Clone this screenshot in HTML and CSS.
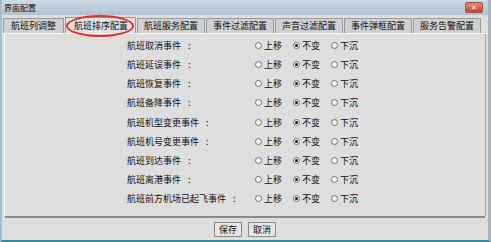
FILE: index.html
```html
<!DOCTYPE html>
<html lang="zh">
  <head>
    <meta charset="UTF-8" />
    <title>界面配置</title>
    <link rel="stylesheet" href="styles.css">
  </head>
  <body>
    <div class="window">
      <div class="titleBar">
        <span class="titleText">界面配置</span>
        <span class="close">✕</span>
      </div>
      <div class="tabs">
        <div class="tab">航班列调整</div>
        <div class="tab active">航班排序配置<span class="mark"></span></div>
        <div class="tab">航班服务配置</div>
        <div class="tab">事件过滤配置</div>
        <div class="tab">声音过滤配置</div>
        <div class="tab">事件弹框配置</div>
        <div class="tab">服务告警配置</div>
      </div>
      <div class="panel">
        <div class="rows"></div>
      </div>
      <div class="footer">
        <button class="btn">保存</button>
        <button class="btn">取消</button>
      </div>
    </div>
    <template id="row">
      <div class="row">
        <div class="label"><span class="name"></span><span class="colon">:</span></div>
        <div class="opts">
          <span class="opt"><i class="radio"></i>上移</span>
          <span class="opt"><i class="radio on"></i>不变</span>
          <span class="opt"><i class="radio"></i>下沉</span>
        </div>
      </div>
    </template>
    <script>
      const names = ['航班取消事件', '航班延误事件', '航班恢复事件', '航班备降事件', '航班机型变更事件',
        '航班机号变更事件', '航班到达事件', '航班离港事件', '航班前方机场已起飞事件'];
      const rows = document.querySelector('.rows');
      const tpl = document.getElementById('row').content.firstElementChild;
      for (const n of names) {
        const el = tpl.cloneNode(true);
        el.querySelector('.name').textContent = n;
        rows.appendChild(el);
      }
    </script>
  </body>
</html>
```

FILE: styles.css
```css
body {
  margin: 0;
  font-family: "Noto Sans CJK SC", "DejaVu Sans", sans-serif;
  font-size: 9px;
  color: #111;
}
.window {
  width: 491px;
  height: 242px;
  background: #dedede;
  border-left: 2px solid #a9bccb;
  border-right: 3px solid #9fb6c8;
  border-bottom: 2px solid #2f8d9c;
  box-sizing: border-box;
  display: flex;
  flex-direction: column;
}
.titleBar {
  height: 15px;
  flex-shrink: 0;
  background: linear-gradient(#cfdbe6, #aec1d2);
  display: flex;
  align-items: center;
  justify-content: space-between;
  padding: 0 5px 0 2px;
}
.titleText {
  font-size: 8px;
  color: #111;
}
.close {
  width: 18px;
  height: 11px;
  background: linear-gradient(#e98a70, #c4472d);
  border: 1px solid #a5493a;
  box-sizing: border-box;
  color: #fff;
  font-size: 7px;
  line-height: 9px;
  text-align: center;
  border-radius: 2px;
}
.tabs {
  display: flex;
  align-items: flex-end;
  padding: 2px 0 0 1px;
  height: 16px;
  flex-shrink: 0;
  border-bottom: 1px solid #f6f6f6;
}
.tab {
  position: relative;
  height: 14px;
  line-height: 14px;
  padding: 0 6px;
  margin-right: 1px;
  background: #d0d0d0;
  border: 1px solid #9a9a9a;
  border-bottom: none;
  white-space: nowrap;
}
.tab:first-child {
  padding: 0 7px;
}
.tab.active {
  background: #e2e2e2;
  height: 15px;
  line-height: 15px;
  padding: 0 7px 0 8px;
}
.mark {
  position: absolute;
  left: 0;
  top: -3px;
  width: 68px;
  height: 22px;
  border: 2px solid #e0302e;
  border-radius: 50%;
  box-sizing: border-box;
}
.panel {
  flex: 1;
  border-left: 1px solid #f6f6f6;
  border-right: 1px solid #a8a8a8;
  margin: 0 2px;
}
.rows {
  padding: 2px 0 0 122px;
}
.row {
  display: flex;
  height: 19.15px;
  align-items: center;
}
.label {
  width: 128px;
}
.colon {
  margin-left: 7px;
}
.opts {
  display: flex;
  gap: 11px;
}
.opt {
  display: flex;
  align-items: center;
  gap: 2px;
}
.radio {
  width: 5px;
  height: 5px;
  border: 1px solid #6e6e6e;
  border-radius: 50%;
  background: #fafafa;
  position: relative;
}
.radio.on::after {
  content: "";
  position: absolute;
  left: 1px;
  top: 1px;
  width: 3px;
  height: 3px;
  border-radius: 50%;
  background: #111;
}
.footer {
  height: 22px;
  flex-shrink: 0;
  border-top: 2px solid #8a8a8a;
  display: flex;
  justify-content: center;
  align-items: center;
  gap: 6px;
  margin: 0 3px;
}
.btn {
  font-family: inherit;
  font-size: 9px;
  height: 15px;
  width: 28px;
  padding: 0;
  line-height: 13px;
  background: #e6e6e6;
  border: 1px solid #8a8a8a;
  color: #111;
}
```
